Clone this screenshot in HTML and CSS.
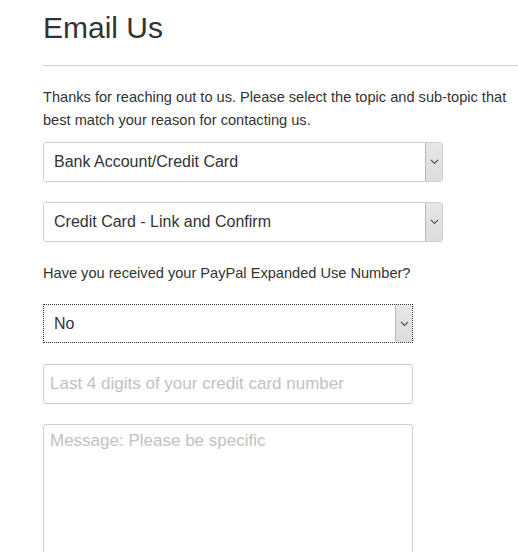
FILE: index.html
```html
<!DOCTYPE html>
<html>
<head>
<meta charset="utf-8">
<link rel="stylesheet" href="styles.css">
</head>
<body>
<div class="page">
  <h1 class="title">Email Us</h1>
  <hr class="rule">
  <p class="intro">Thanks for reaching out to us. Please select the topic and sub-topic that best match your reason for contacting us.</p>
  <div class="select wide">
    <span class="value">Bank Account/Credit Card</span>
    <span class="arrow"><svg width="9" height="6" viewBox="0 0 9 6"><path d="M1 1l3.5 3.5L8 1" fill="none" stroke="#555" stroke-width="1.1"/></svg></span>
  </div>
  <div class="select wide">
    <span class="value">Credit Card - Link and Confirm</span>
    <span class="arrow"><svg width="9" height="6" viewBox="0 0 9 6"><path d="M1 1l3.5 3.5L8 1" fill="none" stroke="#555" stroke-width="1.1"/></svg></span>
  </div>
  <p class="label">Have you received your PayPal Expanded Use Number?</p>
  <div class="select narrow focused">
    <span class="value">No</span>
    <span class="arrow"><svg width="9" height="6" viewBox="0 0 9 6"><path d="M1 1l3.5 3.5L8 1" fill="none" stroke="#555" stroke-width="1.1"/></svg></span>
  </div>
  <input class="field" type="text" placeholder="Last 4 digits of your credit card number">
  <textarea class="field area" placeholder="Message: Please be specific"></textarea>
</div>
</body>
</html>
```
FILE: styles.css
```css
html, body {
  margin: 0;
  padding: 0;
  background: #fff;
  overflow: hidden;
}
.page {
  padding: 0 0 0 43px;
  font-family: "Liberation Sans", Arial, sans-serif;
  color: #333;
  display: flex;
  flex-direction: column;
  align-items: flex-start;
}
.title {
  margin: 10px 0 0;
  font-size: 30px;
  font-weight: normal;
  line-height: 36px;
  color: #333;
}
.rule {
  align-self: stretch;
  margin: 19px 0 0;
  border: 0;
  border-top: 1px solid #d2d2d2;
  height: 0;
}
.intro {
  margin: 20px 0 0;
  font-size: 14.6px;
  line-height: 23px;
  width: 472px;
}
.select {
  display: flex;
  align-items: stretch;
  box-sizing: border-box;
  height: 40px;
  border: 1px solid #cfcfcf;
  border-radius: 3px;
  font-size: 16px;
  color: #333;
}
.wide { width: 400px; margin-top: 10px; }
.wide + .wide { margin-top: 20px; }
.value {
  flex: 1;
  display: flex;
  align-items: center;
  padding-left: 10px;
}
.arrow {
  width: 16px;
  display: flex;
  align-items: center;
  justify-content: center;
  background: linear-gradient(#e6e6e6, #dddddd);
  border-left: 1px solid #b9b9b9;
  border-radius: 0 2px 2px 0;
}
.label {
  margin: 21px 0 0;
  font-size: 14.6px;
  line-height: 20px;
}
.narrow {
  width: 370px;
  height: 39px;
  margin-top: 21px;
}
.focused {
  border: 1px dotted #333;
  border-radius: 0;
}
.focused .arrow { border-radius: 0; }
.field {
  box-sizing: border-box;
  width: 370px;
  height: 40px;
  margin: 21px 0 0;
  padding: 0 6px;
  border: 1px solid #cfcfcf;
  border-radius: 3px;
  font-family: "Liberation Sans", Arial, sans-serif;
  font-size: 17px;
  color: #333;
  outline: none;
}
.field::placeholder { color: #c2c2c2; }
.area {
  height: 180px;
  margin-top: 20px;
  padding: 6px;
  resize: none;
}
```
